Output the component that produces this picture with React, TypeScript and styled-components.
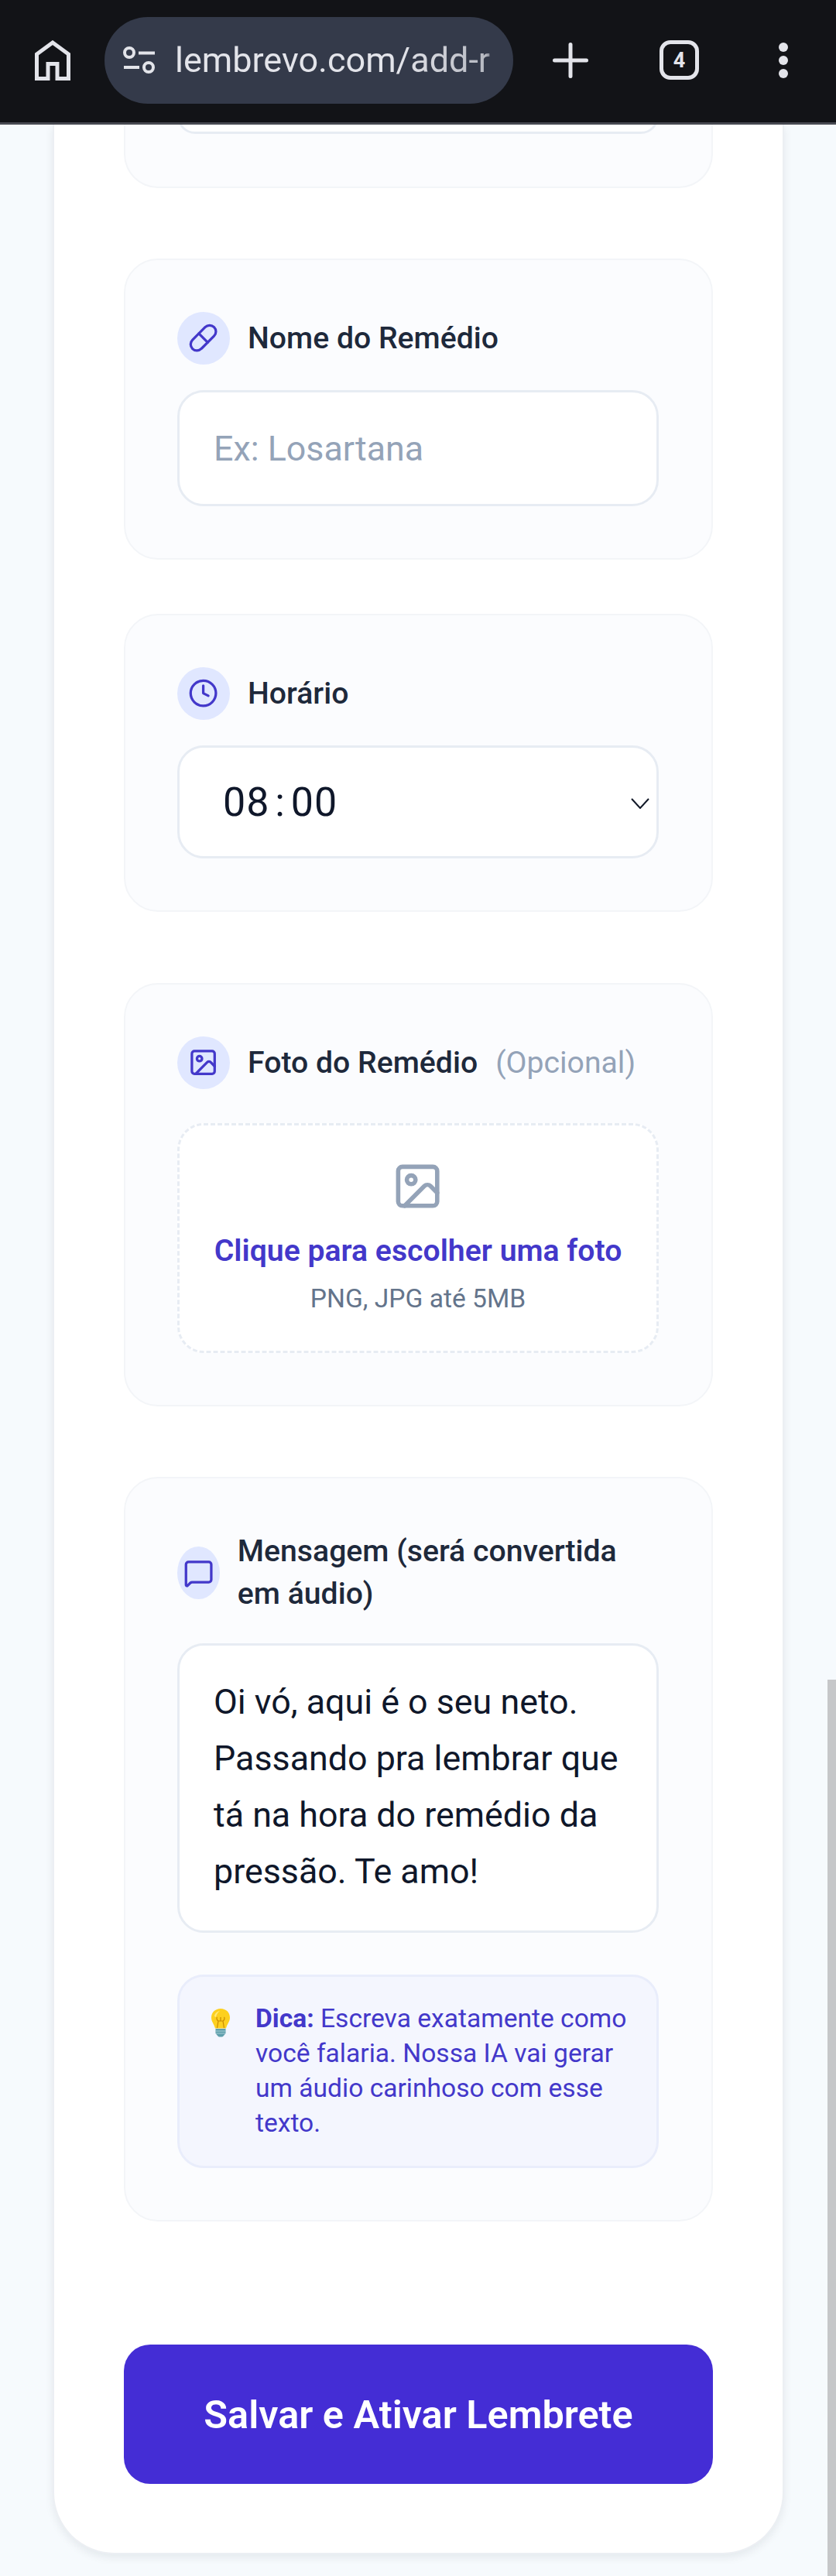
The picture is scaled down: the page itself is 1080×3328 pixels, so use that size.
import styled, { createGlobalStyle } from "styled-components";
import { Clock, Image as ImageIcon, MessageSquare, Pill } from "lucide-react";

const GlobalStyle = createGlobalStyle`
  html, body {
    margin: 0;
    padding: 0;
    background: #f6fafd;
  }
  * {
    box-sizing: border-box;
  }
  body {
    font-family: Roboto, "Liberation Sans", sans-serif;
  }
`;

const App = () => {
  return (
    <Page>
      <GlobalStyle />
      <BrowserBar>
        <HomeButton>
          <svg width="46" height="52" viewBox="0 0 46 52" fill="none" stroke="#e3e4ea" strokeWidth="5">
            <path d="M2.500 18 23 3l20.500 15v31.500H29V30.500H17v19H2.500z" />
          </svg>
        </HomeButton>
        <AddressPill>
          <svg width="42" height="35" viewBox="0 0 42 35" fill="none" stroke="#e3e4ea" strokeWidth="4">
            <circle cx="8" cy="8" r="6" />
            <path d="M20 8.500h21M1 27h20" />
            <circle cx="33" cy="27" r="6" />
          </svg>
          <UrlText>lembrevo.com/add-r</UrlText>
        </AddressPill>
        <PlusButton>
          <svg width="46" height="46" viewBox="0 0 46 46" fill="none" stroke="#e3e4ea" strokeWidth="5" strokeLinecap="round">
            <path d="M23 2.500v41M2.500 23h41" />
          </svg>
        </PlusButton>
        <TabCount>4</TabCount>
        <MenuDots>
          <span />
          <span />
          <span />
        </MenuDots>
      </BrowserBar>

      <Card>
        <CutSection>
          <CutInput />
        </CutSection>

        <Section $top={91}>
          <Label>
            <IconCircle>
              <Pill size={39.2} />
            </IconCircle>
            <LabelText>Nome do Remédio</LabelText>
          </Label>
          <TextInput placeholder="Ex: Losartana" />
        </Section>

        <Section $top={70}>
          <Label>
            <IconCircle>
              <Clock size={39.2} />
            </IconCircle>
            <LabelText>Horário</LabelText>
          </Label>
          <TimeSelect>
            <TimeValue>08 : 00</TimeValue>
            <svg width="24" height="14" viewBox="0 0 24 14" fill="none" stroke="#111827" strokeWidth="2">
              <path d="M1 1l11 12L23 1" />
            </svg>
          </TimeSelect>
        </Section>

        <Section $top={92}>
          <Label $bottom={44}>
            <IconCircle>
              <ImageIcon size={39.2} />
            </IconCircle>
            <LabelText>Foto do Remédio</LabelText>
            <OptionalText>(Opcional)</OptionalText>
          </Label>
          <DropZone>
            <DropIcon>
              <ImageIcon size={67.2} />
            </DropIcon>
            <DropTitle>Clique para escolher uma foto</DropTitle>
            <DropHint>PNG, JPG até 5MB</DropHint>
          </DropZone>
        </Section>

        <Section $top={91}>
          <Label $bottom={36}>
            <IconCircle>
              <MessageSquare size={39.2} />
            </IconCircle>
            <LabelText>Mensagem (será convertida em áudio)</LabelText>
          </Label>
          <MessageArea
            rows={4}
            readOnly
            value="Oi vó, aqui é o seu neto. Passando pra lembrar que tá na hora do remédio da pressão. Te amo!"
          />
          <TipBox>
            <TipBulb width="26" height="38" viewBox="0 0 26 38">
              <path d="M13 1C6 1 1 6 1 12.500c0 5.500 3.500 8 5 14h14c1.500-6 5-8.500 5-14C25 6 20 1 13 1z" fill="#fdd01f" />
              <path d="M5 11c.5-4 3.500-6.500 7-7-2.500 2-4.500 4.500-5 8z" fill="#ffe97a" />
              <path d="M8.500 26 10 17M17.500 26 16 17M10 17c-2-1-2.500-4-1.500-5M16 17c2-1 2.500-4 1.500-5M13 17v-5M10 17h6" fill="none" stroke="#c98a00" strokeWidth="1.200" />
              <path d="M6.500 27h13v6l-3 3.500a3 3 0 0 1-2 1h-3a3 3 0 0 1-2-1l-3-3.500z" fill="#5f9fad" />
              <path d="M6.500 30h13M7 33h12" stroke="#a8cdd3" strokeWidth="1.200" />
            </TipBulb>
            <TipText>
              <strong>Dica:</strong> Escreva exatamente como você falaria. Nossa IA vai gerar um áudio carinhoso com esse texto.
            </TipText>
          </TipBox>
        </Section>

        <SaveButton>Salvar e Ativar Lembrete</SaveButton>
      </Card>

      <ScrollThumb />
    </Page>
  );
};

const Page = styled.div`
  position: relative;
  height: 3328px;
  overflow: hidden;
  background: #f6fafd;
`;

const BrowserBar = styled.header`
  height: 161px;
  padding-bottom: 3px;
  background: #121317;
  border-bottom: 3px solid #484a52;
  display: flex;
  align-items: center;
`;

const HomeButton = styled.div`
  display: flex;
  margin-left: 45px;
`;

const AddressPill = styled.div`
  width: 528px;
  height: 112px;
  margin-left: 44px;
  padding-left: 24px;
  border-radius: 56px;
  background: #343a4a;
  display: flex;
  align-items: center;
  gap: 25px;
`;

const UrlText = styled.span`
  width: 414px;
  overflow: hidden;
  font-size: 45px;
  color: #e3e4ea;
  white-space: nowrap;
  mask-image: linear-gradient(to right, #000 70%, rgba(0, 0, 0, 0.75) 97%, transparent);
`;

const PlusButton = styled.div`
  display: flex;
  margin-left: 51px;
`;

const TabCount = styled.div`
  width: 51px;
  height: 51px;
  margin-left: 92px;
  border: 5px solid #e3e4ea;
  border-radius: 14px;
  color: #e3e4ea;
  font-size: 27px;
  font-weight: 700;
  display: flex;
  align-items: center;
  justify-content: center;
`;

const MenuDots = styled.div`
  margin-left: 103px;
  display: flex;
  flex-direction: column;
  gap: 5px;

  span {
    width: 12px;
    height: 12px;
    border-radius: 50%;
    background: #e3e4ea;
  }
`;

const Card = styled.main`
  width: 945px;
  height: 3139px;
  margin-left: 68px;
  padding: 0 90px;
  background: #ffffff;
  border: 2px solid #eceff3;
  border-top: none;
  border-radius: 0 0 80px 80px;
  box-shadow: 0 4px 12px rgba(15, 23, 42, 0.08);
`;

const CutSection = styled.div`
  height: 82px;
  width: 761px;
  padding: 0 68px 0 67px;
  overflow: hidden;
  background: #fbfcfe;
  border: 2px solid #f3f5f8;
  border-top: none;
  border-radius: 0 0 44px 44px;
`;

const CutInput = styled.div`
  height: 46px;
  margin-top: -34px;
  background: #ffffff;
  border: 3px solid #e7ecf3;
  border-radius: 34px;
`;

const Section = styled.section<{ $top: number }>`
  width: 761px;
  margin-top: ${(props) => props.$top + "px"};
  padding: 67px 68px 67px 67px;
  background: #fbfcfe;
  border: 2px solid #f3f5f8;
  border-radius: 44px;
  display: flex;
  flex-direction: column;
`;

const Label = styled.label<{ $bottom?: number }>`
  display: flex;
  align-items: center;
  gap: 23px;
  margin-bottom: ${(props) => (props.$bottom || 33) + "px"};
`;

const IconCircle = styled.span`
  width: 68px;
  height: 68px;
  border-radius: 50%;
  background: #e0e7ff;
  color: #4338ca;
  display: flex;
  align-items: center;
  justify-content: center;
`;

const LabelText = styled.span`
  font-size: 39.2px;
  line-height: 55px;
  font-weight: 500;
  color: #1e293b;
`;

const OptionalText = styled.span`
  font-size: 39.2px;
  line-height: 55px;
  color: #94a3b8;
`;

const TextInput = styled.input`
  width: 100%;
  height: 150px;
  padding: 0 44px;
  background: #ffffff;
  border: 3px solid #e7ecf3;
  border-radius: 34px;
  font-family: Roboto, sans-serif;
  font-size: 44.8px;
  color: #0f172a;
  outline: none;

  &::placeholder {
    color: #94a3b8;
    opacity: 1;
  }
`;

const TimeSelect = styled.div`
  height: 146px;
  padding: 0 9px 0 56px;
  background: #ffffff;
  border: 3px solid #e7ecf3;
  border-radius: 34px;
  display: flex;
  align-items: center;
  justify-content: space-between;

  svg {
    margin-top: 4px;
  }
`;

const TimeValue = styled.span`
  font-size: 52px;
  letter-spacing: 1px;
  word-spacing: -7px;
  color: #0f172a;
`;

const DropZone = styled.div`
  padding: 44.8px 0;
  background: #ffffff;
  border: 3px dashed #e7ecf3;
  border-radius: 34px;
  display: flex;
  flex-direction: column;
  align-items: center;
`;

const DropIcon = styled.div`
  display: flex;
  color: #94a3b8;
`;

const DropTitle = styled.div`
  margin-top: 22.4px;
  font-size: 39.2px;
  line-height: 56px;
  font-weight: 600;
  color: #4338ca;
`;

const DropHint = styled.div`
  margin-top: 11.2px;
  font-size: 33.6px;
  line-height: 44.8px;
  color: #64748b;
`;

const MessageArea = styled.textarea`
  display: block;
  width: 100%;
  height: 374px;
  padding: 36px 44px;
  background: #ffffff;
  border: 3px solid #e7ecf3;
  border-radius: 34px;
  font-family: Roboto, sans-serif;
  font-size: 44.8px;
  line-height: 73px;
  color: #0f172a;
  outline: none;
  resize: none;
  overflow: hidden;
`;

const TipBox = styled.div`
  height: 250px;
  margin-top: 54px;
  padding: 31px 36px 0 40px;
  background: #f4f6fe;
  border: 3px solid #e9edfb;
  border-radius: 34px;
  display: flex;
  gap: 32px;
  align-items: flex-start;
`;

const TipBulb = styled.svg`
  flex-shrink: 0;
  margin-top: 9px;
`;

const TipText = styled.p`
  margin: 0;
  font-size: 33.6px;
  line-height: 45px;
  color: #4338ca;

  strong {
    font-weight: 700;
  }
`;

const SaveButton = styled.button`
  display: block;
  width: 761px;
  height: 180px;
  margin-top: 159px;
  background: #442dd5;
  border: none;
  border-radius: 34px;
  font-family: Roboto, sans-serif;
  font-size: 50.4px;
  font-weight: 600;
  color: #ffffff;
`;

const ScrollThumb = styled.div`
  position: absolute;
  right: 0;
  top: 2170px;
  bottom: 0;
  width: 11px;
  background: #c6c7c9;
`;

export default App;
